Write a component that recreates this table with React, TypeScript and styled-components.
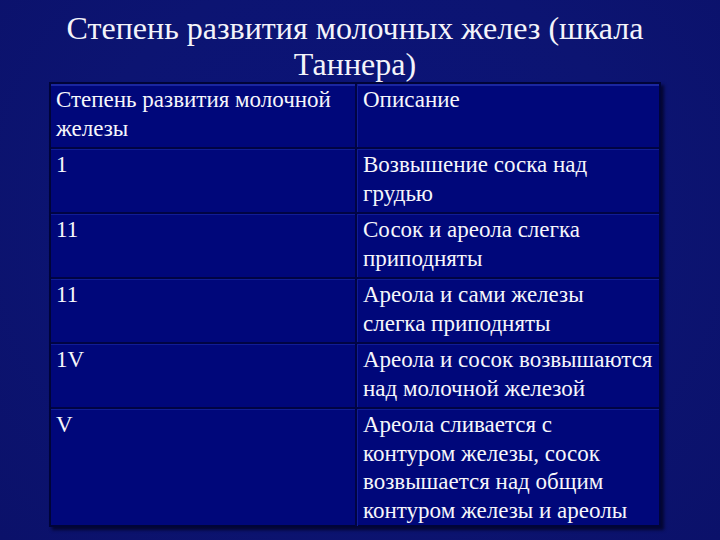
import React from 'react';
import styled, { createGlobalStyle } from 'styled-components';

const Global = createGlobalStyle`
  html, body { margin: 0; padding: 0; }
  body {
    width: 720px;
    height: 540px;
    overflow: hidden;
    background: #0c1472;
    font-family: "Liberation Serif", "Times New Roman", serif;
    color: #ffffff;
  }
`;

// each row: stage + description split the way the slide wraps it
const rows = [
  { stage: '1', lines: ['Возвышение соска над', 'грудью'] },
  { stage: '11', lines: ['Сосок и ареола слегка', 'приподняты'] },
  { stage: '11', lines: ['Ареола и сами железы', 'слегка приподняты'] },
  { stage: '1V', lines: ['Ареола и сосок возвышаются', 'над молочной железой'] },
  {
    stage: 'V',
    lines: ['Ареола сливается с', 'контуром железы, сосок', 'возвышается над общим', 'контуром железы и ареолы'],
  },
];

const Lines = ({ lines }: { lines: string[] }) => (
  <>
    {lines.map((l, i) => (
      <React.Fragment key={i}>
        {i > 0 && <br />}
        {l}
      </React.Fragment>
    ))}
  </>
);

const App = () => {
  return (
    <>
      <Global />
      <Slide>
        <Title>
          Степень развития молочных желез (шкала
          <br />
          Таннера)
        </Title>
        <Table>
          <Row>
            <Cell>
              <Lines lines={['Степень развития молочной', 'железы']} />
            </Cell>
            <Cell right>Описание</Cell>
          </Row>
          {rows.map((r, i) => (
            <Row key={i} last={i === rows.length - 1}>
              <Cell>{r.stage}</Cell>
              <Cell right>
                <Lines lines={r.lines} />
              </Cell>
            </Row>
          ))}
        </Table>
      </Slide>
    </>
  );
};

export default App;

const Slide = styled.div`
  width: 720px;
  height: 540px;
  box-sizing: border-box;
  padding-left: 49px;
  display: flex;
  flex-direction: column;
  align-items: flex-start;
  background: radial-gradient(ellipse at 50% 40%, #0b137a 0%, #0c1472 55%, #0b116a 100%);
`;

const Title = styled.div`
  width: 612px;
  margin: 10px 0 0;
  font-family: "Liberation Serif", "Times New Roman", serif;
  font-size: 32px;
  line-height: 36px;
  text-align: center;
  color: #f4f4fa;
`;

const Table = styled.div`
  width: 612px;
  box-sizing: border-box;
  display: flex;
  flex-direction: column;
  border: 2px solid #000438;
  box-shadow: inset 0 2px 0 #1a26a0, 3px 3px 3px rgba(0, 0, 25, 0.7);
  background: #00077a;
`;

const Row = styled.div<{ last?: boolean }>`
  display: grid;
  grid-template-columns: 304px 1fr;
  height: ${(p) => (p.last ? 116 : 65)}px;
  box-sizing: border-box;
  border-bottom: ${(p) => (p.last ? 'none' : '2px solid #000444')};
  box-shadow: ${(p) => (p.last ? 'none' : '0 1px 0 #101c96')};
`;

const Cell = styled.div<{ right?: boolean }>`
  padding: 2px 0 0 ${(p) => (p.right ? 6 : 5)}px;
  font-family: "Liberation Serif", "Times New Roman", serif;
  font-size: 23px;
  line-height: 28.7px;
  white-space: nowrap;
  color: #f6f6fb;
  border-left: ${(p) => (p.right ? '2px solid #000444' : 'none')};
  box-shadow: ${(p) => (p.right ? 'inset 1px 0 0 #101c96' : 'none')};
`;
